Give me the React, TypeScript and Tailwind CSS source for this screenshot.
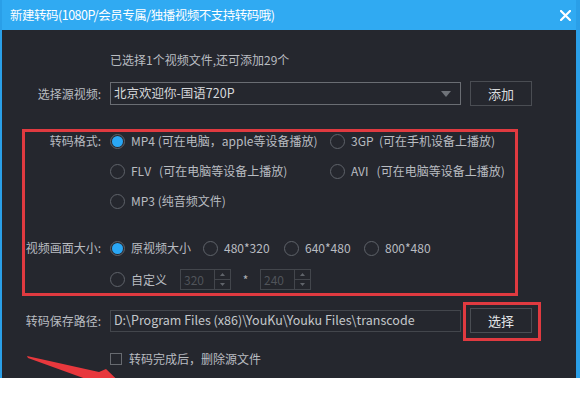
import React from "react";

const font = { fontFamily: '"Noto Sans CJK SC", "Noto Sans", sans-serif' };

function Radio({ checked }: { checked?: boolean }) {
  return (
    <span className="flex h-[15px] w-[15px] shrink-0 items-center justify-center rounded-full border border-[#5f636a]">
      {checked ? <span className="h-[11px] w-[11px] rounded-full bg-[#2aa7f5]" /> : null}
    </span>
  );
}

function Opt({ checked, children, className }: { checked?: boolean; children: React.ReactNode; className?: string }) {
  return (
    <div className={"flex items-center " + (className ?? "")}>
      <Radio checked={checked} />
      <span className="ml-[6px] whitespace-nowrap">{children}</span>
    </div>
  );
}

function Spin({ value }: { value: string }) {
  return (
    <div className="flex h-[21px] w-[51px] items-stretch border border-[#43464c] bg-[#24262c]">
      <span className="flex flex-1 items-center pl-[3px] text-[12px] text-[#50545a]">{value}</span>
      <div className="flex w-[16px] flex-col border-l border-[#43464c]">
        <div className="flex flex-1 items-center justify-center border-b border-[#43464c]">
          <svg width="5" height="3" viewBox="0 0 5 3"><path d="M0 3 L2.5 0 L5 3 Z" fill="#60646a" /></svg>
        </div>
        <div className="flex flex-1 items-center justify-center">
          <svg width="5" height="3" viewBox="0 0 5 3"><path d="M0 0 L2.5 3 L5 0 Z" fill="#60646a" /></svg>
        </div>
      </div>
    </div>
  );
}

export default function App() {
  return (
    <div className="h-[394px] w-[580px] overflow-hidden bg-white" style={font}>
      <div className="relative flex h-[378px] w-[580px] flex-col overflow-hidden border-l-2 border-r-[4px] border-[#2a9fe8] bg-[#25272e] text-[12px] text-[#b9bcc1]">
        {/* title bar */}
        <div className="-ml-[2px] -mr-[4px] flex h-[30px] shrink-0 items-center justify-between bg-[#30aaf2] pl-[10px] pr-[9px] text-white">
          <span className="text-[12.5px] tracking-[-0.5px]">新建转码(1080P/会员专属/独播视频不支持转码哦)</span>
          <svg width="11" height="11" viewBox="0 0 11 11">
            <path d="M1 1 L10 10 M10 1 L1 10" stroke="white" strokeWidth="2.2" strokeLinecap="round" />
          </svg>
        </div>

        {/* info */}
        <div className="mt-[21px] pl-[108px] leading-[18px]">已选择1个视频文件,还可添加29个</div>

        {/* source */}
        <div className="mt-[12px] flex h-[25px] items-center">
          <span className="w-[99px] text-right">选择源视频:</span>
          <div className="ml-[9px] flex h-[23px] w-[351px] items-center justify-between border border-[#6a6d73] pl-[3px] pr-[9px] text-[12.5px] text-[#d6d8db]">
            <span>北京欢迎你-国语720P</span>
            <svg width="10" height="6" viewBox="0 0 10 6"><path d="M0 0 L10 0 L5 6 Z" fill="#6f7379" /></svg>
          </div>
          <div className="ml-[9px] flex h-[25px] w-[62px] items-center justify-center border border-[#4a4d53] text-[13px] text-[#d8dadd]">添加</div>
        </div>

        {/* red annotated section */}
        <div className="ml-[20px] mt-[23px] flex h-[167px] w-[496px] flex-col border-[3px] border-[#e03a40]">
          <div className="mt-[1px] flex h-[16px] items-center">
            <span className="w-[76px] text-right">转码格式:</span>
            <Opt checked className="ml-[9px] w-[220px]">MP4 (可在电脑，apple等设备播放)</Opt>
            <Opt>3GP&nbsp;&nbsp;(可在手机设备上播放)</Opt>
          </div>
          <div className="mt-[14px] flex h-[16px] items-center">
            <span className="w-[76px]" />
            <Opt className="ml-[9px] w-[220px]">FLV&nbsp;&nbsp;&nbsp;(可在电脑等设备上播放)</Opt>
            <Opt>AVI&nbsp;&nbsp;&nbsp;(可在电脑等设备上播放)</Opt>
          </div>
          <div className="mt-[14px] flex h-[16px] items-center">
            <span className="w-[76px]" />
            <Opt className="ml-[9px]">MP3 (纯音频文件)</Opt>
          </div>
          <div className="mt-[31px] flex h-[16px] items-center">
            <span className="w-[76px] whitespace-nowrap text-right">视频画面大小:</span>
            <Opt checked className="ml-[9px] w-[93px]">原视频大小</Opt>
            <Opt className="w-[81px]">480*320</Opt>
            <Opt className="w-[80px]">640*480</Opt>
            <Opt>800*480</Opt>
          </div>
          <div className="mt-[13px] flex h-[21px] items-center">
            <span className="w-[76px]" />
            <Opt className="ml-[9px] w-[70px]">自定义</Opt>
            <Spin value="320" />
            <span className="w-[29px] text-center text-[#aeb1b6]">*</span>
            <Spin value="240" />
          </div>
        </div>

        {/* save path */}
        <div className="mt-[12px] flex h-[25px] items-center">
          <span className="w-[99px] text-right">转码保存路径:</span>
          <div className="ml-[9px] flex h-[22px] w-[351px] items-center border border-[#43464c] pl-[3px] text-[12.5px] text-[#c4c7cb]">
            D:\Program Files (x86)\YouKu\Youku Files\transcode
          </div>
          <div className="relative ml-[9px]">
            <div className="flex h-[25px] w-[62px] items-center justify-center border border-[#4a4d53] text-[13px] text-[#e2e4e6]">选择</div>
            <div className="absolute -bottom-[8px] -left-[7px] -right-[9px] -top-[6px] border-[3px] border-[#e03a40]" />
          </div>
        </div>

        {/* checkbox */}
        <div className="mt-[18px] flex h-[16px] items-center pl-[108px]">
          <span className="h-[12px] w-[12px] border border-[#676a70]" />
          <span className="ml-[7px]">转码完成后，删除源文件</span>
        </div>

        {/* annotation arrow */}
        <svg className="pointer-events-none absolute left-[-2px] top-0" width="580" height="394" viewBox="0 0 580 394">
          <polygon points="27,356 99,372 106,369 132,394 84,394 86,379 28,358" fill="#e8383d" />
        </svg>
      </div>
    </div>
  );
}
